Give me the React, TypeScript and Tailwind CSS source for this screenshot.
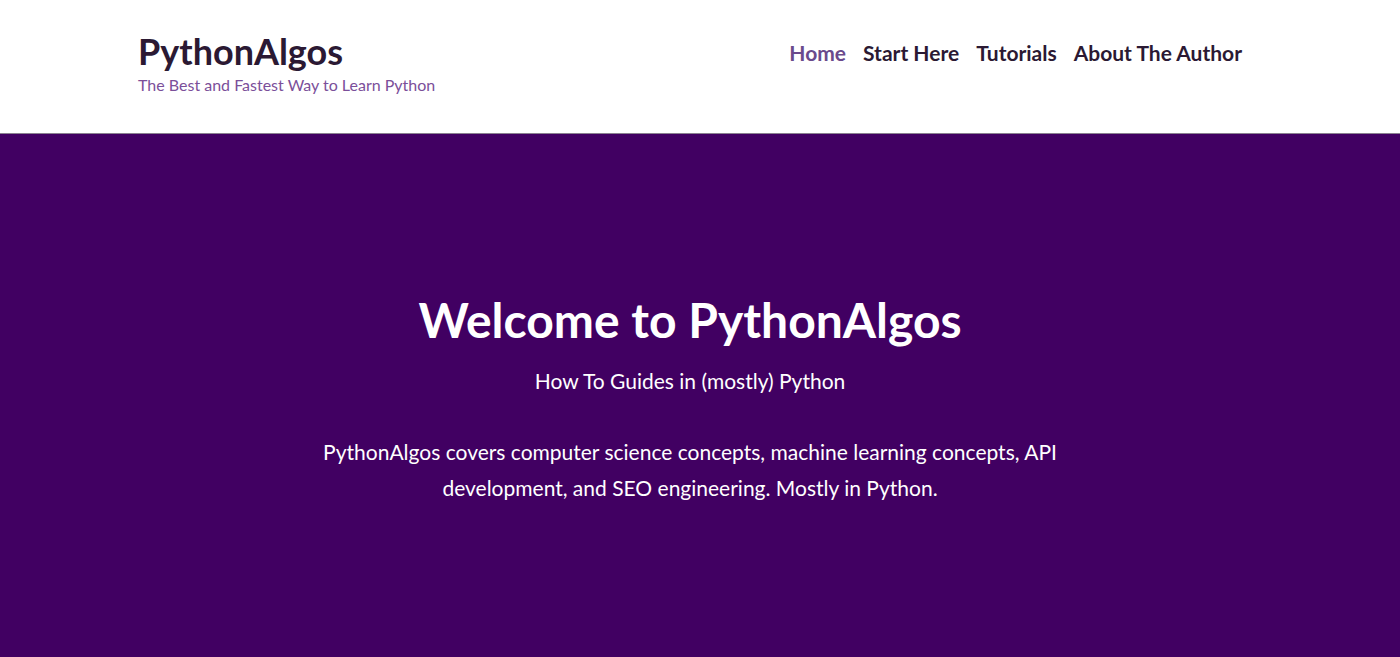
import React from "react";

const navItems = [
  { label: "Home", active: true },
  { label: "Start Here", active: false },
  { label: "Tutorials", active: false },
  { label: "About The Author", active: false },
];

export default function App() {
  return (
    <div className="min-h-screen bg-[#410062] font-['Lato','Noto_Sans',sans-serif]">
      <header className="bg-white border-b border-[#8a8190] pr-[20px]">
        <div className="mx-auto flex h-[133px] max-w-[1104px] items-start justify-between pt-[31px]">
          <div>
            <h1 className="text-[36px] font-bold leading-[40px] text-[#2b1933]">
              PythonAlgos
            </h1>
            <p className="mt-[4px] text-[16px] leading-[20px] text-[#7b4f9a]">
              The Best and Fastest Way to Learn Python
            </p>
          </div>
          <nav className="mt-[6px]">
            <ul className="flex gap-[17px]">
              {navItems.map((item) => (
                <li key={item.label}>
                  <a
                    href="#"
                    className={
                      item.active
                        ? "text-[21px] font-bold text-[#6a4a8c]"
                        : "text-[21px] font-bold text-[#2b1933]"
                    }
                  >
                    {item.label}
                  </a>
                </li>
              ))}
            </ul>
          </nav>
        </div>
      </header>

      <section className="flex flex-col items-center pt-[156px] pb-[140px] pr-[20px] text-center text-white">
        <h2 className="text-[48px] font-bold leading-[60px]">Welcome to PythonAlgos</h2>
        <p className="mt-[16px] text-[21px] leading-[30px]">How To Guides in (mostly) Python</p>
        <p className="mt-[38px] max-w-[760px] text-[21px] leading-[36px]">
          PythonAlgos covers computer science concepts, machine learning concepts, API
          development, and SEO engineering. Mostly in Python.
        </p>
      </section>
    </div>
  );
}
